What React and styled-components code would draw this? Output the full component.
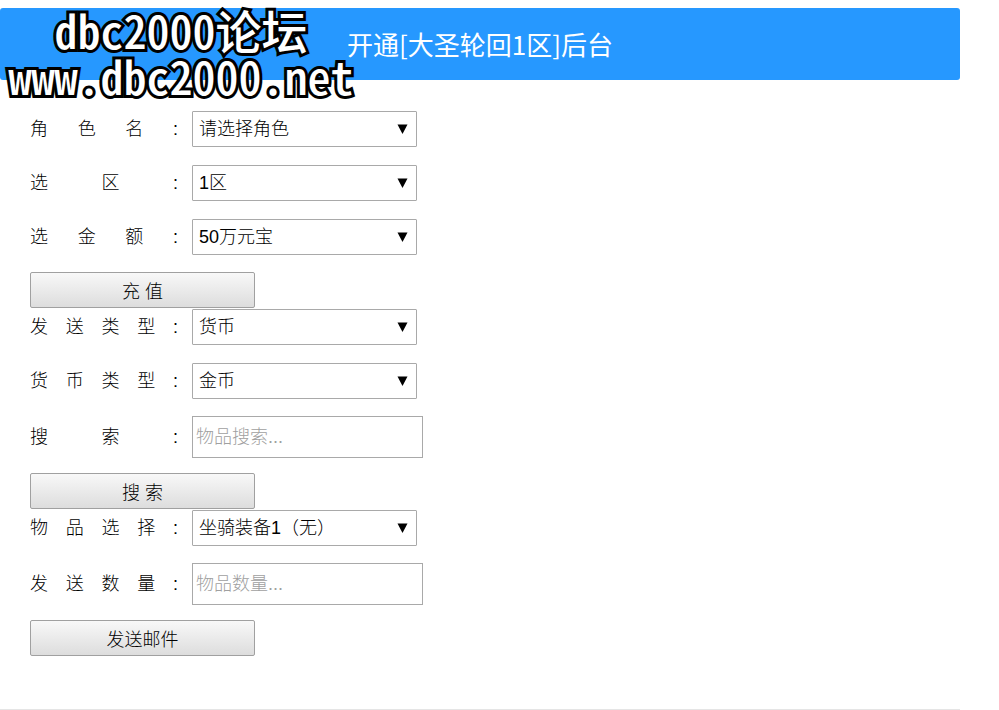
import React, { useState } from 'react';
import styled, { createGlobalStyle } from 'styled-components';

const GlobalStyle = createGlobalStyle`
  body {
    margin: 0;
    background: #fff;
    color: #000;
    font-family: "Liberation Sans", "Noto Sans CJK SC", sans-serif;
    font-size: 18px;
    font-weight: 300;
  }
`;

const Page = styled.div`
  position: relative;
  max-width: 960px;
  padding-top: 8px;
`;

const Header = styled.header`
  padding: 16px;
  border-radius: 3px;
  background-color: #2698ff;
  color: #fff;
  text-align: center;
`;

const Title = styled.h1`
  margin: 0;
  font-family: "Noto Sans CJK SC", sans-serif;
  font-size: 26px;
  font-weight: 400;
  line-height: 40px;
`;

const Watermark = styled.div`
  position: absolute;
  top: 6px;
  left: 6px;
  width: 350px;
  color: #fff;
  font-family: "Noto Sans CJK SC", sans-serif;
  font-size: 46px;
  font-weight: 500;
  font-feature-settings: "hwid";
  line-height: 46px;
  text-align: center;
  white-space: nowrap;
  -webkit-text-stroke: 6px #000;
  paint-order: stroke fill;
  pointer-events: none;
`;

const Form = styled.form`
  padding: 30px 30px 53px;
  border-bottom: 1px solid #e5e5e5;
`;

const Row = styled.div`
  display: flex;
  align-items: center;
  gap: 14px;
  margin-bottom: ${props => props.$gap}px;
`;

const Label = styled.label`
  width: 148px;
  line-height: 26px;
  text-align: justify;
  text-align-last: justify;
`;

const SelectBox = styled.div`
  position: relative;
  width: 225px;
  margin-top: 1px;
`;

const Select = styled.select`
  display: block;
  box-sizing: border-box;
  width: 100%;
  height: 36px;
  padding: 0 24px 0 6px;
  border: 1px solid #a9a9a9;
  border-radius: 1px;
  background: #fff;
  color: #000;
  font: inherit;
  appearance: none;
`;

const Arrow = styled.svg`
  position: absolute;
  top: 13px;
  right: 9px;
  width: 11px;
  height: 10px;
  pointer-events: none;
`;

const Input = styled.input`
  box-sizing: border-box;
  width: 231px;
  height: 42px;
  padding: 0 3px;
  border: 1px solid #a9a9a9;
  background: #fff;
  color: #000;
  font: inherit;

  &::placeholder {
    color: #a0a0a0;
  }
`;

const Button = styled.button`
  display: block;
  box-sizing: border-box;
  width: 225px;
  height: 36px;
  padding: 0;
  border: 1px solid #a0a0a0;
  border-radius: 2px;
  background: linear-gradient(#f8f8f8, #dddddd);
  color: #000;
  font: inherit;
  cursor: pointer;
`;

const SelectField = ({ id, label, options }) => (
  <Row $gap={17}>
    <Label htmlFor={id}>{label}:</Label>
    <SelectBox>
      <Select id={id} name={id}>
        {options.map(option => (
          <option key={option}>{option}</option>
        ))}
      </Select>
      <Arrow viewBox="0 0 11 10" aria-hidden="true">
        <path d="M0.5 0.5h10L5.5 10z" />
      </Arrow>
    </SelectBox>
  </Row>
);

const InputField = ({ id, label, placeholder }) => {
  const [value, setValue] = useState('');

  return (
    <Row $gap={15}>
      <Label htmlFor={id}>{label}:</Label>
      <Input
        id={id}
        name={id}
        type="text"
        placeholder={placeholder}
        value={value}
        onChange={(e) => setValue(e.target.value)}
      />
    </Row>
  );
};

const App = () => (
  <>
    <GlobalStyle />
    <Page>
      <Header>
        <Title>开通[大圣轮回1区]后台</Title>
      </Header>
      <Watermark>
        dbc2000论坛
        <br />
        www.dbc2000.net
      </Watermark>

      <Form lang="zh-CN" onSubmit={(e) => e.preventDefault()}>
        <SelectField id="role" label="角色名" options={['请选择角色']} />
        <SelectField id="zone" label="选区" options={['1区']} />
        <SelectField id="amount" label="选金额" options={['50万元宝']} />
        <Button type="button">充 值</Button>

        <SelectField id="sendType" label="发送类型" options={['货币']} />
        <SelectField id="currency" label="货币类型" options={['金币']} />
        <InputField id="keyword" label="搜索" placeholder="物品搜索..." />
        <Button type="button">搜 索</Button>

        <SelectField id="item" label="物品选择" options={['坐骑装备1（无）']} />
        <InputField id="count" label="发送数量" placeholder="物品数量..." />
        <Button type="submit">发送邮件</Button>
      </Form>
    </Page>
  </>
);

export default App;
